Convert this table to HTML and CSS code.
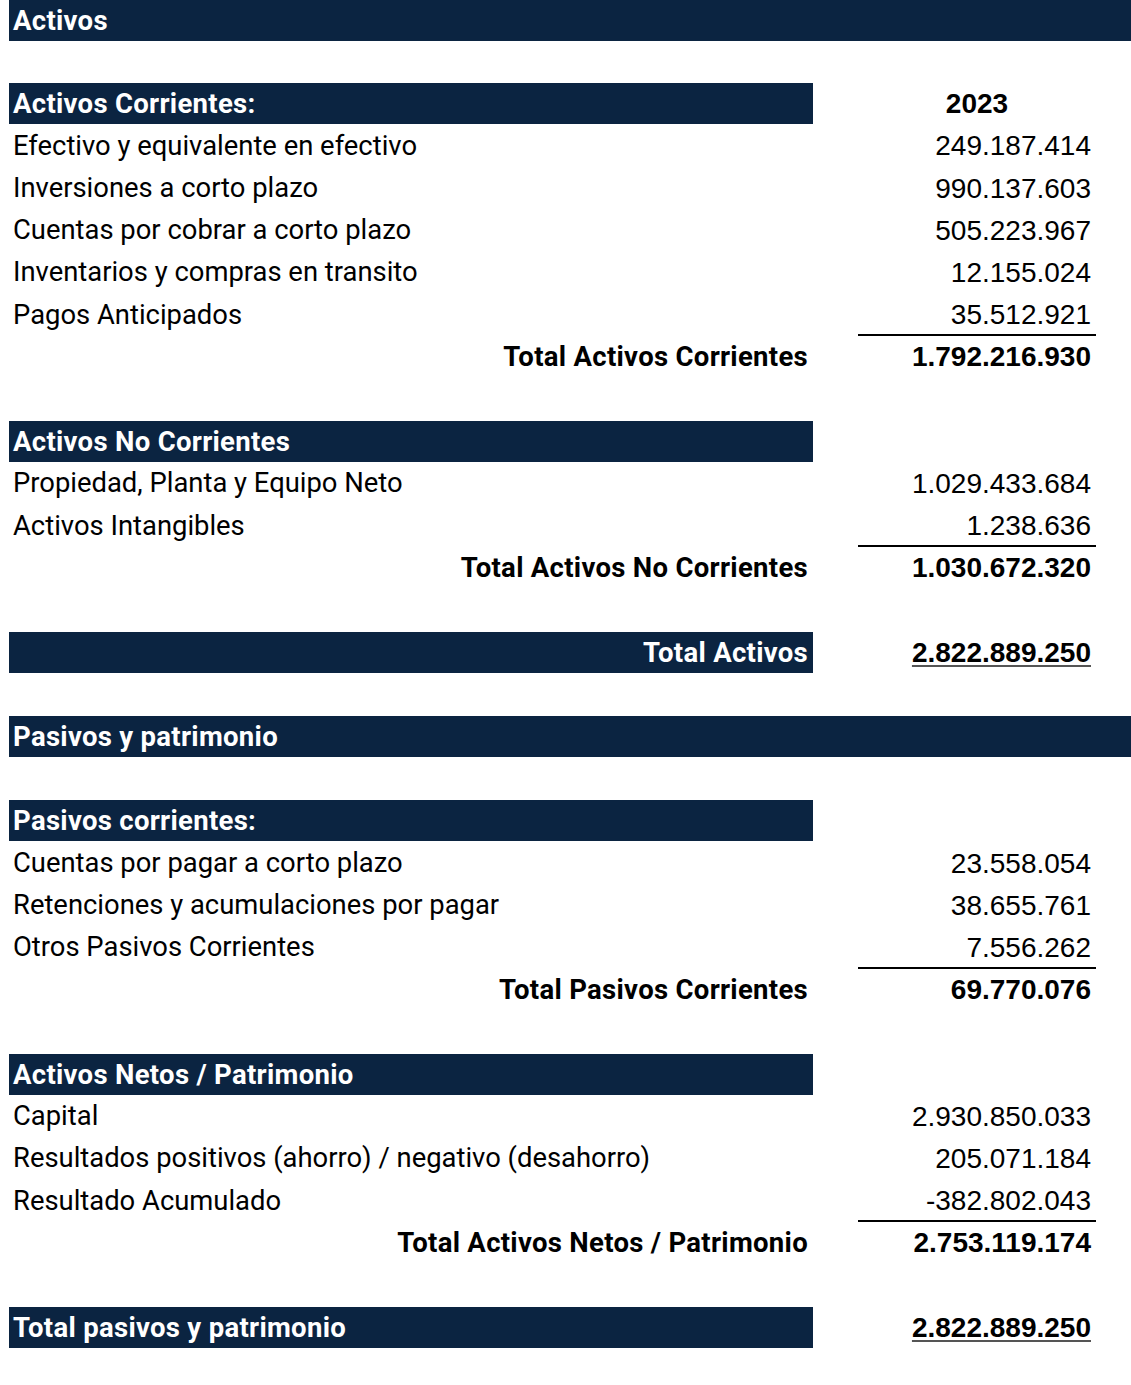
FILE: index.html
```html
<!DOCTYPE html>
<html lang="es">
<head>
<meta charset="utf-8">
<title>Estado de situación financiera</title>
<link rel="stylesheet" href="styles.css">
</head>
<body>
<div class="sheet">
  <div class="row first"><div class="band full">Activos</div></div>
  <div class="row"></div>
  <div class="row"><div class="label band">Activos Corrientes:</div><div class="gap"></div><div class="value year">2023</div></div>
  <div class="row"><div class="label">Efectivo y equivalente en efectivo</div><div class="gap"></div><div class="value">249.187.414</div></div>
  <div class="row"><div class="label">Inversiones a corto plazo</div><div class="gap"></div><div class="value">990.137.603</div></div>
  <div class="row"><div class="label">Cuentas por cobrar a corto plazo</div><div class="gap"></div><div class="value">505.223.967</div></div>
  <div class="row"><div class="label">Inventarios y compras en transito</div><div class="gap"></div><div class="value">12.155.024</div></div>
  <div class="row"><div class="label">Pagos Anticipados</div><div class="gap"></div><div class="value">35.512.921</div></div>
  <div class="row"><div class="label total">Total Activos Corrientes</div><div class="gap"></div><div class="value sum">1.792.216.930</div></div>
  <div class="row"></div>
  <div class="row"><div class="label band">Activos No Corrientes</div></div>
  <div class="row"><div class="label">Propiedad, Planta y Equipo Neto</div><div class="gap"></div><div class="value">1.029.433.684</div></div>
  <div class="row"><div class="label">Activos Intangibles</div><div class="gap"></div><div class="value">1.238.636</div></div>
  <div class="row"><div class="label total">Total Activos No Corrientes</div><div class="gap"></div><div class="value sum">1.030.672.320</div></div>
  <div class="row"></div>
  <div class="row"><div class="label band right">Total Activos</div><div class="gap"></div><div class="value grand"><span>2.822.889.250</span></div></div>
  <div class="row"></div>
  <div class="row"><div class="band full">Pasivos y patrimonio</div></div>
  <div class="row"></div>
  <div class="row"><div class="label band">Pasivos corrientes:</div></div>
  <div class="row"><div class="label">Cuentas por pagar a corto plazo</div><div class="gap"></div><div class="value">23.558.054</div></div>
  <div class="row"><div class="label">Retenciones y acumulaciones por pagar</div><div class="gap"></div><div class="value">38.655.761</div></div>
  <div class="row"><div class="label">Otros Pasivos Corrientes</div><div class="gap"></div><div class="value">7.556.262</div></div>
  <div class="row"><div class="label total">Total Pasivos Corrientes</div><div class="gap"></div><div class="value sum">69.770.076</div></div>
  <div class="row"></div>
  <div class="row"><div class="label band">Activos Netos / Patrimonio</div></div>
  <div class="row"><div class="label">Capital</div><div class="gap"></div><div class="value">2.930.850.033</div></div>
  <div class="row"><div class="label">Resultados positivos (ahorro) / negativo (desahorro)</div><div class="gap"></div><div class="value">205.071.184</div></div>
  <div class="row"><div class="label">Resultado Acumulado</div><div class="gap"></div><div class="value">-382.802.043</div></div>
  <div class="row"><div class="label total">Total Activos Netos / Patrimonio</div><div class="gap"></div><div class="value sum">2.753.119.174</div></div>
  <div class="row"></div>
  <div class="row"><div class="label band">Total pasivos y patrimonio</div><div class="gap"></div><div class="value grand"><span>2.822.889.250</span></div></div>
</div>
</body>
</html>
```
FILE: styles.css
```css
html, body {
  margin: 0;
  padding: 0;
  background: #ffffff;
}
body {
  padding-left: 9px;
  overflow: hidden;
}
.sheet {
  display: flex;
  flex-direction: column;
  width: 1122px;
}
.row {
  display: flex;
  height: 42.2px;
  box-sizing: border-box;
}
.row.first {
  height: 41px;
}
.label {
  width: 804px;
  flex: none;
  box-sizing: border-box;
  padding-left: 4px;
  display: flex;
  align-items: center;
  font-family: Roboto, "Liberation Sans", sans-serif;
  font-size: 27.4px;
  color: #000000;
  height: 41px;
}
.gap {
  width: 45px;
  flex: none;
}
.value {
  width: 238px;
  flex: none;
  box-sizing: border-box;
  padding-right: 5px;
  display: flex;
  align-items: center;
  justify-content: flex-end;
  font-family: "Liberation Sans", Arial, sans-serif;
  font-size: 28px;
  color: #000000;
  height: 42.2px;
}
.band {
  background: #0b2441;
  color: #ffffff;
  font-weight: 700;
  font-family: Roboto, "Liberation Sans", sans-serif;
  font-size: 27.5px;
  letter-spacing: 0.3px;
  height: 41px;
  display: flex;
  align-items: center;
  padding-left: 4px;
  box-sizing: border-box;
}
.band.full {
  width: 1122px;
}
.band.right {
  justify-content: flex-end;
  padding-right: 5px;
}
.label.total {
  justify-content: flex-end;
  padding-right: 5px;
  font-weight: 700;
  font-size: 27.5px;
  letter-spacing: 0.3px;
}
.value.year {
  justify-content: center;
  font-weight: 700;
  padding-right: 0;
}
.value.sum {
  font-weight: 700;
  border-top: 2px solid #000000;
  margin-top: -2px;
  height: 44.2px;
}
.value.grand {
  font-weight: 700;
}
.value.grand span {
  text-decoration: underline;
  text-decoration-color: #555555;
  text-decoration-thickness: 2px;
  text-underline-offset: 3px;
}
```
